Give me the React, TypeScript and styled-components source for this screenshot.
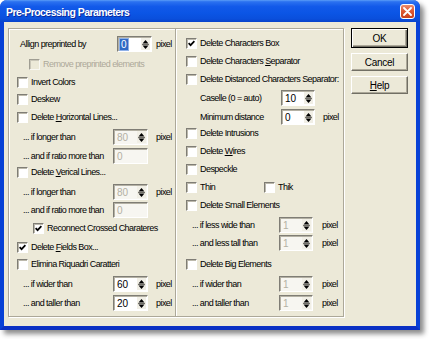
import React from 'react';
import styled, { createGlobalStyle } from 'styled-components';

const GlobalStyle = createGlobalStyle`
    html, body {
        margin: 0;
        padding: 0;
        background: #ffffff;
    }
    body {
        font-family: "Liberation Sans", Arial, sans-serif;
    }
`;

function Check({ checked, disabled }: { checked?: boolean; disabled?: boolean }) {
    return (
        <CheckBox $disabled={disabled}>
            {checked && (
                <svg width="7" height="7" viewBox="0 0 7 7">
                    <path d="M0.6 3.1 L2.6 5.2 L6.4 1.1" fill="none" stroke="#000" strokeWidth="1.7" />
                </svg>
            )}
        </CheckBox>
    );
}

function Spin({
    value,
    width = 35,
    disabled,
    selected,
    noArrows,
}: {
    value: string;
    width?: number;
    disabled?: boolean;
    selected?: boolean;
    noArrows?: boolean;
}) {
    return (
        <SpinBox $w={width} $disabled={disabled}>
            <SpinValue $disabled={disabled} $selected={selected}>
                {value}
            </SpinValue>
            {!noArrows && (
                <SpinArrows>
                    <svg width="7" height="11" viewBox="0 0 7 11">
                        <path d="M3.5 1 L6.5 4.4 H0.5 Z" fill="#000" />
                        <path d="M0 5.5 H7" stroke="#6f6d66" strokeWidth="1" />
                        <path d="M0.5 6.6 H6.5 L3.5 10 Z" fill="#000" />
                    </svg>
                </SpinArrows>
            )}
        </SpinBox>
    );
}

export default function App() {
    return (
        <Page>
            <GlobalStyle />
            <Window>
                <TitleBar>
                    <Title>Pre-Processing Parameters</Title>
                    <CloseButton>
                        <svg width="9" height="9" viewBox="0 0 9 9">
                            <path d="M1 1 L8 8 M8 1 L1 8" stroke="#fff" strokeWidth="1.8" strokeLinecap="round" />
                        </svg>
                    </CloseButton>
                </TitleBar>
                <Client>
                    <Group>
                        <Column $w={166}>
                            <Row $top={7} $indent={11}>
                                <Label $w={97}>Allign preprinted by</Label>
                                <Spin value="0" selected />
                                <Unit $gap={4}>pixel</Unit>
                            </Row>
                            <Row $top={4} $indent={20}>
                                <Check disabled />
                                <Text $disabled>Remove preprinted elements</Text>
                            </Row>
                            <Row $top={2} $indent={8}>
                                <Check />
                                <Text>Invert Colors</Text>
                            </Row>
                            <Row $top={1} $indent={8}>
                                <Check />
                                <Text>Deskew</Text>
                            </Row>
                            <Row $top={2} $indent={8}>
                                <Check />
                                <Text>
                                    Delete <u>H</u>orizontal Lines...
                                </Text>
                            </Row>
                            <Row $top={4} $indent={14}>
                                <Label $w={90}>... if longer than</Label>
                                <Spin value="80" disabled />
                                <Unit $gap={8}>pixel</Unit>
                            </Row>
                            <Row $top={3} $indent={14}>
                                <Label $w={90}>... and if ratio more than</Label>
                                <Spin value="0" disabled noArrows />
                            </Row>
                            <Row $top={0} $indent={8}>
                                <Check />
                                <Text>
                                    Delete <u>V</u>erical Lines...
                                </Text>
                            </Row>
                            <Row $top={4} $indent={14}>
                                <Label $w={90}>... if longer than</Label>
                                <Spin value="80" disabled />
                                <Unit $gap={8}>pixel</Unit>
                            </Row>
                            <Row $top={2} $indent={14}>
                                <Label $w={90}>... and if ratio more than</Label>
                                <Spin value="0" disabled noArrows />
                            </Row>
                            <Row $top={2} $indent={24}>
                                <Check checked />
                                <Text>Reconnect Crossed Charateres</Text>
                            </Row>
                            <Row $top={3} $indent={8}>
                                <Check checked />
                                <Text>
                                    Delete <u>F</u>ields Box...
                                </Text>
                            </Row>
                            <Row $top={1} $indent={8}>
                                <Check />
                                <Text>Elimina Riquadri Caratteri</Text>
                            </Row>
                            <Row $top={4} $indent={14}>
                                <Label $w={90}>... if wider than</Label>
                                <Spin value="60" />
                                <Unit $gap={8}>pixel</Unit>
                            </Row>
                            <Row $top={3} $indent={14}>
                                <Label $w={90}>... and taller than</Label>
                                <Spin value="20" />
                                <Unit $gap={8}>pixel</Unit>
                            </Row>
                        </Column>

                        <Column $w={168} $divided>
                            <Row $top={6} $indent={10}>
                                <Check checked />
                                <Text>Delete Characters Box</Text>
                            </Row>
                            <Row $top={2} $indent={10}>
                                <Check />
                                <Text>
                                    Delete Characters <u>S</u>eparator
                                </Text>
                            </Row>
                            <Row $top={2} $indent={10}>
                                <Check />
                                <Text>Delete Distanced Characters Separator:</Text>
                            </Row>
                            <Row $top={3} $indent={24}>
                                <Label $w={81}>Caselle (0 = auto)</Label>
                                <Spin value="10" width={34} />
                            </Row>
                            <Row $top={3} $indent={24}>
                                <Label $w={81}>Minimum distance</Label>
                                <Spin value="0" width={34} />
                                <Unit $gap={8}>pixel</Unit>
                            </Row>
                            <Row $top={0} $indent={10}>
                                <Check />
                                <Text>Delete Intrusions</Text>
                            </Row>
                            <Row $top={2} $indent={10}>
                                <Check />
                                <Text>
                                    Delete <u>W</u>ires
                                </Text>
                            </Row>
                            <Row $top={2} $indent={10}>
                                <Check />
                                <Text>Despeckle</Text>
                            </Row>
                            <Row $top={2} $indent={10}>
                                <Pair $w={78}>
                                    <Check />
                                    <Text>Thin</Text>
                                </Pair>
                                <Check />
                                <Text>Thik</Text>
                            </Row>
                            <Row $top={2} $indent={10}>
                                <Check />
                                <Text>Delete Small Elements</Text>
                            </Row>
                            <Row $top={4} $indent={16}>
                                <Label $w={87}>... if less wide than</Label>
                                <Spin value="1" width={34} disabled />
                                <Unit $gap={9}>pixel</Unit>
                            </Row>
                            <Row $top={2} $indent={16}>
                                <Label $w={87}>... and less tall than</Label>
                                <Spin value="1" width={34} disabled />
                                <Unit $gap={9}>pixel</Unit>
                            </Row>
                            <Row $top={5} $indent={10}>
                                <Check />
                                <Text>Delete Big Elements</Text>
                            </Row>
                            <Row $top={4} $indent={16}>
                                <Label $w={87}>... if wider than</Label>
                                <Spin value="1" width={34} disabled />
                                <Unit $gap={9}>pixel</Unit>
                            </Row>
                            <Row $top={3} $indent={16}>
                                <Label $w={87}>... and taller than</Label>
                                <Spin value="1" width={34} disabled />
                                <Unit $gap={9}>pixel</Unit>
                            </Row>
                        </Column>
                    </Group>

                    <ButtonColumn>
                        <Button $default>OK</Button>
                        <Button>Cancel</Button>
                        <Button>
                            <u>H</u>elp
                        </Button>
                    </ButtonColumn>
                </Client>
            </Window>
        </Page>
    );
}

const Page = styled.div`
    width: 429px;
    height: 339px;
    background: #ffffff;
`;

const Window = styled.div`
    width: 420px;
    height: 330px;
    display: flex;
    flex-direction: column;
    border-radius: 7px 7px 0 0;
    box-shadow: 4px 4px 5px rgba(0, 0, 0, 0.45);
    background: #0841d6;
    overflow: hidden;
`;

const TitleBar = styled.div`
    height: 22px;
    flex-shrink: 0;
    display: flex;
    align-items: center;
    justify-content: space-between;
    padding: 0 5px 0 6px;
    background: linear-gradient(
        180deg,
        #5b9df7 0%,
        #2b71f0 8%,
        #1259e9 30%,
        #0b55e5 60%,
        #0a4fdc 85%,
        #0843cb 100%
    );
`;

const Title = styled.div`
    color: #ffffff;
    font-size: 10.5px;
    font-weight: 700;
    letter-spacing: -0.55px;
    text-shadow: 1px 1px 0 #0c2a9a;
    padding-top: 1px;
`;

const CloseButton = styled.div`
    width: 15px;
    height: 15px;
    box-sizing: border-box;
    display: flex;
    align-items: center;
    justify-content: center;
    border: 1px solid #ffffff;
    border-radius: 3px;
    background: linear-gradient(180deg, #ea8d70 0%, #de5a33 45%, #c8401c 100%);
`;

const Client = styled.div`
    flex: 1;
    display: flex;
    gap: 7px;
    padding: 6px 7px 9px 4px;
    background: #ece9d8;
    border-style: solid;
    border-width: 0 4px 4px 4px;
    border-color: #0841d6 #0841d6 #0a30c4 #0841d6;
`;

const Group = styled.div`
    display: flex;
    width: 336px;
    height: 289px;
    box-sizing: border-box;
    border: 1px solid #aca899;
    box-shadow: inset 1px 1px 0 #ffffff, 1px 1px 0 #ffffff;
`;

const Column = styled.div<{ $w: number; $divided?: boolean }>`
    width: ${(p) => p.$w}px;
    box-sizing: border-box;
    display: flex;
    flex-direction: column;
    border-left: ${(p) => (p.$divided ? '1px solid #aca899' : 'none')};
    box-shadow: ${(p) => (p.$divided ? 'inset 1px 0 0 #ffffff' : 'none')};
`;

const Row = styled.div<{ $top: number; $indent: number }>`
    display: flex;
    align-items: center;
    height: 16px;
    margin-top: ${(p) => p.$top}px;
    padding-left: ${(p) => p.$indent}px;
    white-space: nowrap;
    font-size: 9px;
    letter-spacing: -0.55px;
    color: #000000;

    u {
        text-decoration-thickness: 1px;
        text-underline-offset: 1px;
    }
`;

const Pair = styled.div<{ $w: number }>`
    display: flex;
    align-items: center;
    width: ${(p) => p.$w}px;
`;

const Label = styled.span<{ $w: number }>`
    width: ${(p) => p.$w}px;
    flex-shrink: 0;
`;

const Text = styled.span<{ $disabled?: boolean }>`
    margin-left: 3px;
    color: ${(p) => (p.$disabled ? '#aca899' : '#000000')};
`;

const Unit = styled.span<{ $gap: number }>`
    margin-left: ${(p) => p.$gap}px;
`;

const CheckBox = styled.span<{ $disabled?: boolean }>`
    width: 11px;
    height: 11px;
    box-sizing: border-box;
    flex-shrink: 0;
    display: flex;
    align-items: center;
    justify-content: center;
    border: 1px solid;
    border-color: #7f7d75 #ffffff #ffffff #7f7d75;
    box-shadow: inset 1px 1px 0 #bcb9ac;
    background: ${(p) => (p.$disabled ? '#ece9d8' : '#ffffff')};
    opacity: ${(p) => (p.$disabled ? 0.7 : 1)};
`;

const SpinBox = styled.span<{ $w: number; $disabled?: boolean }>`
    width: ${(p) => p.$w}px;
    height: 16px;
    box-sizing: border-box;
    flex-shrink: 0;
    display: flex;
    align-items: center;
    justify-content: space-between;
    padding: 0 1px 0 2px;
    border: 1px solid;
    border-color: #7f7d75 #ffffff #ffffff #7f7d75;
    box-shadow: inset 1px 1px 0 #b4b1a4;
    background: ${(p) => (p.$disabled ? '#f7f6f1' : '#ffffff')};
`;

const SpinValue = styled.span<{ $disabled?: boolean; $selected?: boolean }>`
    font-size: 10px;
    letter-spacing: 0;
    line-height: 11px;
    padding: 0 1px;
    color: ${(p) => (p.$selected ? '#ffffff' : p.$disabled ? '#b3b0a3' : '#000000')};
    background: ${(p) => (p.$selected ? '#316ac5' : 'transparent')};
    outline: ${(p) => (p.$selected ? '1px solid #8fb1e8' : 'none')};
`;

const SpinArrows = styled.span`
    width: 9px;
    height: 12px;
    display: flex;
    align-items: center;
    justify-content: center;
    background: #f1efe6;
`;

const ButtonColumn = styled.div`
    display: flex;
    flex-direction: column;
    gap: 5px;
`;

const Button = styled.div<{ $default?: boolean }>`
    width: 57px;
    height: ${(p) => (p.$default ? 20 : 18)}px;
    box-sizing: border-box;
    display: flex;
    align-items: center;
    justify-content: center;
    background: #ece9d8;
    font-size: 10px;
    letter-spacing: -0.3px;
    color: #000000;
    border: 1px solid;
    border-color: ${(p) => (p.$default ? '#000000' : '#ffffff #716f64 #716f64 #ffffff')};
    box-shadow: ${(p) =>
        p.$default
            ? 'inset 1px 1px 0 #ffffff, inset -1px -1px 0 #716f64, inset -2px -2px 0 #aca899'
            : 'inset -1px -1px 0 #aca899'};
`;
